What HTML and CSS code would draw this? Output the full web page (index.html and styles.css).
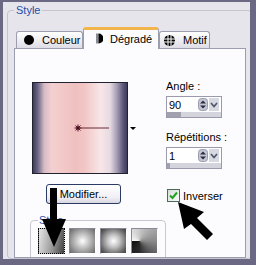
FILE: index.html
```html
<!doctype html>
<html lang="fr">
<head>
    <meta charset="utf-8">
    <title>Style</title>
    <link rel="stylesheet" href="styles.css">
</head>
<body>
    <div class="window">
        <fieldset class="group">
            <legend>Style</legend>
            <div class="tabs">
                <div class="tab tab-color">
                    <svg width="10" height="10" viewBox="0 0 10 10"><circle cx="5" cy="5" r="5" fill="#000"/></svg>
                    <span>Couleur</span>
                </div>
                <div class="tab tab-gradient active">
                    <svg width="7" height="11" viewBox="0 0 7 11"><rect x="0" y="0.5" width="2.5" height="10" fill="#8c8c94"/><path d="M2.5 0.5 A5 5 0 0 1 2.5 10.5 Z" fill="#000"/></svg>
                    <span>Dégradé</span>
                </div>
                <div class="tab tab-pattern">
                    <svg width="11" height="11" viewBox="0 0 11 11"><circle cx="5.5" cy="5.5" r="5.5" fill="#000"/><path d="M0 4h11M0 7h11M4 0v11M7 0v11" stroke="#fff" stroke-width="1"/></svg>
                    <span>Motif</span>
                </div>
            </div>
            <div class="panel">
                <div class="preview-row">
                    <div class="preview">
                        <svg width="94" height="90" viewBox="0 0 94 90">
                            <line x1="47" y1="45" x2="76" y2="45" stroke="#6a2a38" stroke-width="1"/>
                            <path d="M45 41.5v7M41.5 45h7M42.5 42.5l5 5M47.5 42.5l-5 5" stroke="#5a1a28" stroke-width="1"/>
                            <circle cx="45" cy="45" r="1.8" fill="#4a1020"/>
                        </svg>
                    </div>
                    <span class="drop-arrow"></span>
                </div>
                <div class="fields">
                    <span class="field-label">Angle :</span>
                    <div class="spin">
                        <div class="spin-top">
                            <span class="spin-value">90</span>
                            <svg class="spin-arrows" width="10" height="13" viewBox="0 0 10 13"><rect x="0.5" y="0.5" width="9" height="12" rx="3" fill="#c4c6d4" stroke="#9a9cb0"/><path d="M2 5.5h6L5 2.5Z M2 7.5h6L5 10.5Z" fill="#2c2c3c"/></svg>
                            <svg class="spin-drop" width="10" height="13" viewBox="0 0 10 13"><rect width="10" height="13" fill="#d6d8e2"/><path d="M2 5l3 3.5L8 5" fill="none" stroke="#4c5468" stroke-width="1.6"/></svg>
                        </div>
                        <div class="spin-slider"><div class="spin-fill" style="width: 25%"></div></div>
                    </div>
                    <span class="field-label second">Répétitions :</span>
                    <div class="spin">
                        <div class="spin-top">
                            <span class="spin-value">1</span>
                            <svg class="spin-arrows" width="10" height="13" viewBox="0 0 10 13"><rect x="0.5" y="0.5" width="9" height="12" rx="3" fill="#c4c6d4" stroke="#9a9cb0"/><path d="M2 5.5h6L5 2.5Z M2 7.5h6L5 10.5Z" fill="#2c2c3c"/></svg>
                            <svg class="spin-drop" width="10" height="13" viewBox="0 0 10 13"><rect width="10" height="13" fill="#d6d8e2"/><path d="M2 5l3 3.5L8 5" fill="none" stroke="#4c5468" stroke-width="1.6"/></svg>
                        </div>
                        <div class="spin-slider"><div class="spin-fill" style="width: 6%"></div></div>
                    </div>
                </div>
                <div class="btn-row">
                    <button type="button" class="btn">Modifier...</button>
                </div>
                <label class="check">
                    <span class="check-box">
                        <svg width="11" height="11" viewBox="0 0 11 11"><path d="M2 5.5l2.5 2.5L9 2.5" fill="none" stroke="#21a121" stroke-width="2"/></svg>
                    </span>
                    <span>Inverser</span>
                </label>
                <fieldset class="styles">
                    <legend>Style</legend>
                    <div class="swatches">
                        <span class="swatch swatch-linear selected"></span>
                        <span class="swatch swatch-rect"></span>
                        <span class="swatch swatch-radial"></span>
                        <span class="swatch swatch-corner"></span>
                    </div>
                </fieldset>
            </div>
        </fieldset>
    </div>

    <!-- pointer arrows drawn over the dialog -->
    <svg class="overlay" width="256" height="265" viewBox="0 0 256 265">
        <path d="M50 188L57 188L57 219L66 219L54 247L42 219L50 219Z" fill="#000"/>
        <path d="M178 202L204 212L197 218L213 234L207 240L191 224L184 229Z" fill="#000"/>
    </svg>
</body>
</html>
```

FILE: styles.css
```css
body {
    margin: 0;
    width: 256px;
    height: 265px;
    overflow: hidden;
    position: relative;
    background-color: #6b6884;
    font-family: "Liberation Sans", Arial, sans-serif;
    font-size: 11px;
    color: #000;
}
.window {
    margin: 2px 0 0 3px;
    width: 247px;
    height: 257px;
    overflow: hidden;
    background-color: #e6e5eb;
}
.group {
    box-sizing: border-box;
    width: 245px;
    margin: 2px 0 0 4px;
    padding: 10px 5px 0 6px;
    border: 1px solid #c4c3ce;
    border-radius: 4px;
}
.group > legend {
    padding: 0 2px;
    line-height: 13px;
    color: #1e4ea8;
}
.tabs {
    display: flex;
    align-items: flex-end;
    height: 21px;
    margin-left: 2px;
}
.tab {
    box-sizing: border-box;
    height: 17px;
    display: flex;
    align-items: center;
    border: 1px solid #9c9eb0;
    border-bottom: none;
    border-radius: 3px 3px 0 0;
    background: linear-gradient(#ffffff, #dedde6);
}
.tab svg {
    display: block;
}
.tab-color {
    width: 67px;
    padding-left: 7px;
    gap: 8px;
}
.tab-gradient {
    width: 76px;
    padding-left: 12px;
    gap: 7px;
}
.tab-pattern {
    width: 51px;
    padding-left: 4px;
    gap: 8px;
}
.tab.active {
    height: 22px;
    margin-bottom: -1px;
    padding-bottom: 2px;
    position: relative;
    z-index: 1;
    border-top: 3px solid #f2b54c;
    background: #fcfcfe;
}
.panel {
    box-sizing: border-box;
    height: 210px;
    overflow: hidden;
    padding: 31px 0 0 15px;
    border: 1px solid #9c9eb0;
    background-color: #fcfcfe;
    display: grid;
    grid-template-columns: 136px auto;
    align-items: start;
}
.preview-row {
    display: flex;
    align-items: center;
    padding: 2px 0 0 2px;
}
.preview {
    box-sizing: border-box;
    width: 96px;
    height: 92px;
    border: 1px solid #22222e;
    background: linear-gradient(to right, #3e3b5c 0%, #6a6584 5%, #d6bcc6 12%, #f4d0d0 20%, #f0c0c0 45%, #f2c6c6 55%, #f8e6e8 72%, #e6dae2 82%, #9e96b0 90%, #5a5676 96%, #3e3b5c 100%);
}
.preview svg {
    display: block;
}
.drop-arrow {
    width: 0;
    height: 0;
    margin-left: 2px;
    border-left: 3px solid transparent;
    border-right: 3px solid transparent;
    border-top: 3px solid #000;
}
.fields {
    display: flex;
    flex-direction: column;
    align-items: flex-start;
}
.field-label {
    line-height: 13px;
}
.field-label.second {
    margin-top: 13px;
}
.spin {
    box-sizing: border-box;
    width: 56px;
    margin-top: 3px;
    border: 1px solid #9a9aac;
    background-color: #fff;
}
.spin-top {
    display: flex;
    align-items: center;
    height: 15px;
    padding-right: 2px;
}
.spin-value {
    flex: 1;
    padding-left: 2px;
}
.spin-top svg {
    display: block;
}
.spin-arrows {
    margin-right: 1px;
}
.spin-slider {
    height: 5px;
    background-color: #d4d4dc;
}
.spin-fill {
    height: 100%;
    background-color: #a2a2ae;
}
.btn-row {
    padding: 10px 0 0 16px;
}
.btn {
    box-sizing: border-box;
    width: 75px;
    height: 20px;
    padding: 0;
    border: 1px solid #2a3c64;
    border-radius: 3px;
    background: linear-gradient(#ffffff, #f0eff4 70%, #d8d6e0);
    font: inherit;
    color: #000;
}
.check {
    align-self: end;
    margin: 0 0 2px 1px;
    display: flex;
    align-items: center;
    gap: 3px;
}
.check-box {
    box-sizing: border-box;
    width: 13px;
    height: 13px;
    border: 1px solid #4a6a5c;
    background: linear-gradient(135deg, #d8dcd8, #f8faf8);
}
.check-box svg {
    display: block;
}
.styles {
    grid-column: 1;
    margin: 10px 0 0;
    padding: 2px 0 10px 7px;
    border: 1px solid #c8c8d2;
    border-radius: 4px;
    min-width: 0;
}
.styles > legend {
    padding: 0 1px;
    line-height: 12px;
    color: #1e4ea8;
}
.swatches {
    display: flex;
    gap: 4px;
}
.swatch {
    box-sizing: border-box;
    width: 27px;
    height: 26px;
    border: 1px solid;
    border-color: #8a8a96 #ffffff #ffffff #8a8a96;
}
.swatch.selected {
    border: 1px dotted #000;
}
.swatch-linear {
    background: linear-gradient(100deg, #e6e6e6 0%, #9a9a9a 55%, #404040 100%);
}
.swatch-rect {
    background: radial-gradient(circle at 50% 50%, #ffffff 0, #d8d8d8 25%, #8c8c8c 75%, #666666 100%);
}
.swatch-radial {
    background: radial-gradient(circle at 50% 50%, #ffffff 0, #c4c4c4 35%, #606060 80%, #404040 100%);
}
.swatch-corner {
    background: conic-gradient(from 270deg at 30% 50%, #fafafa 0deg, #c8c8c8 90deg, #8a8a8a 180deg, #2a2a2a 270deg, #101010 360deg);
}
.overlay {
    position: absolute;
    left: 0;
    top: 0;
    pointer-events: none;
}
```
